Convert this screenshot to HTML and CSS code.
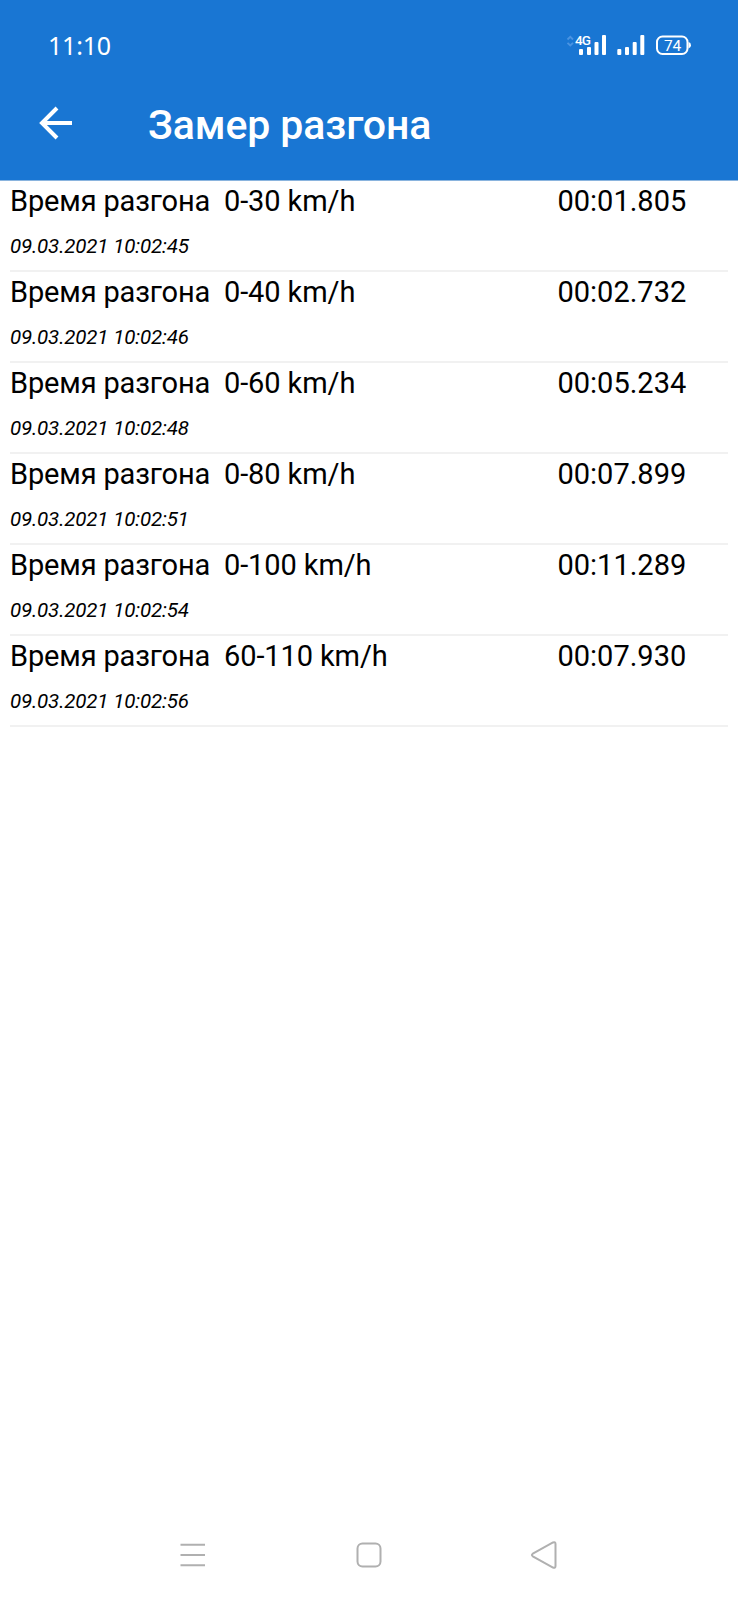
FILE: index.html
```html
<!DOCTYPE html>
<html lang="ru">
<head>
    <meta charset="UTF-8">
    <meta name="viewport" content="width=device-width, initial-scale=1.0">
    <title>Замер разгона</title>
    <link rel="stylesheet" href="styles.css">
</head>
<body>

    <div class="header">
        <div class="status-bar">
            <span class="clock">11:10</span>
            <svg class="status-icons" width="130" height="30" viewBox="0 0 130 30">
                <!-- data arrows -->
                <g fill="none" stroke="#4b94e2" stroke-width="1.8">
                    <path d="M3.5 9.5 L6.3 6.8 L9 9.5"/>
                    <path d="M3.5 12.8 L6.3 15.5 L9 12.8"/>
                </g>
                <text class="network" x="11" y="15">4G</text>
                <!-- signal, both sim cards -->
                <g fill="#fff">
                    <rect x="15" y="19" width="4" height="6" rx="1"/>
                    <rect x="23" y="17" width="4" height="8" rx="1"/>
                    <rect x="30.5" y="12" width="4" height="13" rx="1"/>
                    <rect x="38" y="5" width="4" height="20" rx="1"/>
                    <rect x="53.3" y="19" width="4" height="6" rx="1"/>
                    <rect x="61" y="17" width="4" height="8" rx="1"/>
                    <rect x="68.7" y="12" width="4" height="13" rx="1"/>
                    <rect x="76.3" y="5" width="4" height="20" rx="1"/>
                </g>
                <!-- battery -->
                <rect x="93" y="6.5" width="30.5" height="17.5" rx="5.5" fill="none" stroke="#fff" stroke-width="2"/>
                <path d="M124.5 12 Q127 12.5 127 15.3 Q127 18 124.5 18.5 Z" fill="#fff"/>
                <text class="battery" x="108.5" y="21" text-anchor="middle">74</text>
            </svg>
        </div>
        <div class="toolbar">
            <svg class="back" width="34" height="34" viewBox="0 0 34 34">
                <path d="M18 2 L3 17 L18 32 M3 17 H33" fill="none" stroke="#fff" stroke-width="4"/>
            </svg>
            <h1 class="title">Замер разгона</h1>
        </div>
    </div>

    <div class="list">
        <div class="item">
            <div class="result"><span class="label">Время разгона</span><span class="range">0-30 km/h</span><span class="time">00:01.805</span></div>
            <div class="date">09.03.2021 10:02:45</div>
        </div>
        <div class="item">
            <div class="result"><span class="label">Время разгона</span><span class="range">0-40 km/h</span><span class="time">00:02.732</span></div>
            <div class="date">09.03.2021 10:02:46</div>
        </div>
        <div class="item">
            <div class="result"><span class="label">Время разгона</span><span class="range">0-60 km/h</span><span class="time">00:05.234</span></div>
            <div class="date">09.03.2021 10:02:48</div>
        </div>
        <div class="item">
            <div class="result"><span class="label">Время разгона</span><span class="range">0-80 km/h</span><span class="time">00:07.899</span></div>
            <div class="date">09.03.2021 10:02:51</div>
        </div>
        <div class="item">
            <div class="result"><span class="label">Время разгона</span><span class="range">0-100 km/h</span><span class="time">00:11.289</span></div>
            <div class="date">09.03.2021 10:02:54</div>
        </div>
        <div class="item">
            <div class="result"><span class="label">Время разгона</span><span class="range">60-110 km/h</span><span class="time">00:07.930</span></div>
            <div class="date">09.03.2021 10:02:56</div>
        </div>
    </div>

    <div class="nav-bar">
        <svg width="28" height="28" viewBox="0 0 28 28">
            <path d="M1.5 3.8 H26 M1.5 14 H26 M1.5 24.2 H26"/>
        </svg>
        <svg width="28" height="28" viewBox="0 0 28 28">
            <rect x="2.5" y="2.5" width="23" height="23" rx="5"/>
        </svg>
        <svg width="28" height="28" viewBox="0 0 28 28">
            <path d="M2.8 12.7 L23 1.5 Q25.5 0.5 25.5 3 V25 Q25.5 27.5 23 26.5 L2.8 15.3 Q1 14 2.8 12.7 Z"/>
        </svg>
    </div>

</body>
</html>
```
FILE: styles.css
```css
* {
    box-sizing: border-box;
}

body {
    margin: 0;
    min-height: 1600px;
    display: flex;
    flex-direction: column;
    font-family: Roboto, sans-serif;
    background-color: #fff;
    color: #000;
}

.header {
    height: 181px;
    background-color: #1976d3;
    border-bottom: 1px solid #8ab4de;
    color: #fff;
}

.status-bar {
    display: flex;
    justify-content: space-between;
    align-items: center;
    height: 90px;
    padding: 0 44px 0 48px;
}

.clock {
    margin-bottom: 1px;
    font-family: "Noto Sans", sans-serif;
    font-size: 25px;
    letter-spacing: -0.2px;
    line-height: 34px;
}

.status-icons {
    display: block;
}

.network {
    font-size: 13.5px;
    font-weight: 500;
    letter-spacing: -0.8px;
    fill: #fff;
}

.battery {
    font-size: 15.5px;
    letter-spacing: -0.3px;
    fill: #fff;
}

.toolbar {
    display: flex;
    align-items: center;
    height: 70px;
    padding-left: 39px;
}

.back {
    margin-bottom: 5px;
}

.title {
    margin: 0 0 0 75px;
    font-size: 41px;
    font-weight: 500;
    letter-spacing: -0.1px;
    line-height: 48px;
}

.list {
    padding: 0 10px;
}

.item {
    height: 91px;
    padding-top: 3px;
    border-bottom: 2px solid #f1f1f1;
}

.result {
    display: grid;
    grid-template-columns: 214px 333.5px 1fr;
    font-size: 29px;
    line-height: 34px;
}

.label {
    letter-spacing: -0.15px;
}

.range {
    letter-spacing: -0.1px;
}

.date {
    margin-top: 16px;
    font-size: 20.5px;
    font-style: italic;
    letter-spacing: -0.16px;
    line-height: 24px;
}

.nav-bar {
    display: flex;
    justify-content: space-between;
    align-items: center;
    height: 90px;
    margin-top: auto;
    padding: 0 180px 0 179px;
}

.nav-bar svg {
    fill: none;
    stroke: #b0b0b0;
    stroke-width: 2;
}
```
